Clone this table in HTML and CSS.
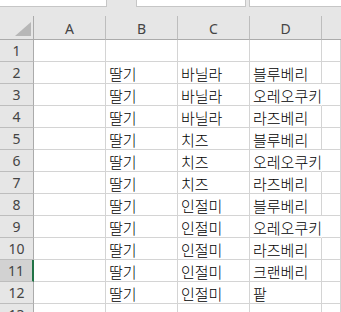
FILE: index.html
```html
<!DOCTYPE html>
<html lang="ko">
<head>
    <meta charset="UTF-8">
    <meta name="viewport" content="width=device-width, initial-scale=1.0">
    <title>Sheet1</title>
    <link rel="stylesheet" href="styles.css">
</head>
<body>
    <div class="formula-bar">
        <div class="box name-box"></div>
        <div class="box fx-box"></div>
        <div class="box input-box"></div>
    </div>
    <div class="sheet">
        <div class="hd corner">
            <svg width="16" height="14" viewBox="0 0 16 14"><polygon points="16,0 16,14 0,14" fill="#b7b7b7"/></svg>
        </div>
        <div class="hd col">A</div>
        <div class="hd col">B</div>
        <div class="hd col">C</div>
        <div class="hd col">D</div>
        <div class="hd col last"></div>

        <div class="hd row">1</div><div class="c"></div><div class="c"></div><div class="c"></div><div class="c"></div><div class="c"></div>
        <div class="hd row">2</div><div class="c"></div><div class="c">딸기</div><div class="c">바닐라</div><div class="c">블루베리</div><div class="c"></div>
        <div class="hd row">3</div><div class="c"></div><div class="c">딸기</div><div class="c">바닐라</div><div class="c over">오레오쿠키</div><div class="c"></div>
        <div class="hd row">4</div><div class="c"></div><div class="c">딸기</div><div class="c">바닐라</div><div class="c">라즈베리</div><div class="c"></div>
        <div class="hd row">5</div><div class="c"></div><div class="c">딸기</div><div class="c">치즈</div><div class="c">블루베리</div><div class="c"></div>
        <div class="hd row">6</div><div class="c"></div><div class="c">딸기</div><div class="c">치즈</div><div class="c over">오레오쿠키</div><div class="c"></div>
        <div class="hd row">7</div><div class="c"></div><div class="c">딸기</div><div class="c">치즈</div><div class="c">라즈베리</div><div class="c"></div>
        <div class="hd row">8</div><div class="c"></div><div class="c">딸기</div><div class="c">인절미</div><div class="c">블루베리</div><div class="c"></div>
        <div class="hd row">9</div><div class="c"></div><div class="c">딸기</div><div class="c">인절미</div><div class="c over">오레오쿠키</div><div class="c"></div>
        <div class="hd row">10</div><div class="c"></div><div class="c">딸기</div><div class="c">인절미</div><div class="c">라즈베리</div><div class="c"></div>
        <div class="hd row selected">11</div><div class="c"></div><div class="c">딸기</div><div class="c">인절미</div><div class="c">크랜베리</div><div class="c"></div>
        <div class="hd row">12</div><div class="c"></div><div class="c">딸기</div><div class="c">인절미</div><div class="c">팥</div><div class="c"></div>
        <div class="hd row">13</div><div class="c"></div><div class="c"></div><div class="c"></div><div class="c"></div><div class="c"></div>
    </div>
</body>
</html>
```

FILE: styles.css
```css
body {
    margin: 0;
    background: #e6e6e6;
    font-family: "Noto Sans", "Noto Sans CJK KR", sans-serif;
    overflow: hidden;
}
.formula-bar {
    display: flex;
    height: 16px;
    align-items: flex-start;
}
.box {
    height: 6px;
    background: #fff;
    border: 1px solid #c6c6c6;
    border-top: none;
    box-sizing: content-box;
}
.name-box {
    margin-left: -1px;
    width: 106px;
}
.fx-box {
    margin-left: 29px;
    width: 108px;
}
.input-box {
    margin-left: 3px;
    flex: 1;
    margin-right: -1px;
}
.sheet {
    display: grid;
    grid-template-columns: 34px 72px 72px 72px 72px 1fr;
    grid-template-rows: 24px;
    grid-auto-rows: 22px;
    background: #fff;
}
.hd {
    background: #e6e6e6;
    color: #444;
    font-size: 14px;
    display: flex;
    align-items: center;
    justify-content: center;
    box-sizing: border-box;
}
.corner {
    border-right: 1px solid #ababab;
    border-bottom: 1px solid #ababab;
    align-items: flex-end;
    justify-content: flex-end;
    padding: 0 2px 3px 0;
}
.col {
    border-right: 1px solid #bdbdbd;
    border-bottom: 1px solid #ababab;
    padding-top: 2px;
}
.col.last {
    border-right: none;
}
.row {
    border-right: 1px solid #ababab;
    border-bottom: 1px solid #bdbdbd;
}
.row.selected {
    background: #d2d2d2;
    border-right: 2px solid #217346;
}
.c {
    border-right: 1px solid #d4d4d4;
    border-bottom: 1px solid #d4d4d4;
    box-sizing: border-box;
    font-family: "Noto Sans CJK KR", sans-serif;
    font-size: 15px;
    font-weight: 300;
    color: #000;
    padding-left: 3px;
    display: flex;
    align-items: flex-end;
    line-height: 19px;
    white-space: nowrap;
}
.over {
    border-right-color: transparent;
}
```
